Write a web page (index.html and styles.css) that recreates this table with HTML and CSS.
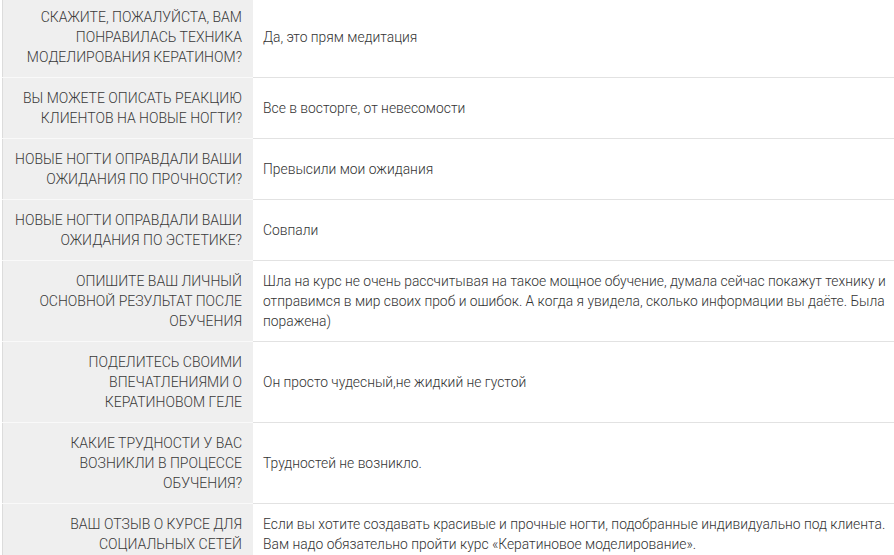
FILE: index.html
```html
<!DOCTYPE html>
<html lang="ru">
<head>
  <meta charset="UTF-8" />
  <meta name="viewport" content="width=device-width, initial-scale=1.0" />
  <title>Отзыв о курсе</title>
  <link rel="stylesheet" href="styles.css">
</head>
<body>
  <div class="review">
    <table class="qa-table">
      <tr>
        <td class="question">Скажите, пожалуйста, вам понравилась техника моделирования кератином?</td>
        <td class="answer">Да, это прям медитация</td>
      </tr>
      <tr>
        <td class="question">Вы можете описать реакцию клиентов на новые ногти?</td>
        <td class="answer">Все в восторге, от невесомости</td>
      </tr>
      <tr>
        <td class="question">Новые ногти оправдали ваши ожидания по прочности?</td>
        <td class="answer">Превысили мои ожидания</td>
      </tr>
      <tr>
        <td class="question">Новые ногти оправдали ваши ожидания по эстетике?</td>
        <td class="answer">Совпали</td>
      </tr>
      <tr>
        <td class="question">Опишите ваш личный основной результат после обучения</td>
        <td class="answer">Шла на курс не очень рассчитывая на такое мощное обучение, думала сейчас покажут технику и отправимся в мир своих проб и ошибок. А когда я увидела, сколько информации вы даёте. Была поражена)</td>
      </tr>
      <tr>
        <td class="question">Поделитесь своими впечатлениями о кератиновом геле</td>
        <td class="answer">Он просто чудесный,не жидкий не густой</td>
      </tr>
      <tr>
        <td class="question">Какие трудности у вас возникли в процессе обучения?</td>
        <td class="answer">Трудностей не возникло.</td>
      </tr>
      <tr>
        <td class="question">Ваш отзыв о курсе для социальных сетей</td>
        <td class="answer">Если вы хотите создавать красивые и прочные ногти, подобранные индивидуально под клиента.<br>Вам надо обязательно пройти курс «Кератиновое моделирование».</td>
      </tr>
    </table>
  </div>
</body>
</html>
```

FILE: styles.css
```css
body {
  margin: 0;
  font-family: Roboto, 'Liberation Sans', sans-serif;
  background-color: #fff;
  color: #333;
  overflow: hidden;
}
.review {
  padding-left: 2px;
  margin-top: -3px;
}
.qa-table {
  width: 100%;
  border-collapse: collapse;
  border-left: 1px solid #dcdcdc;
}
.qa-table td {
  font-weight: 300;
  line-height: 20px;
  padding: 10px;
  vertical-align: middle;
  border-bottom: 1px solid #e2e2e2;
}
.question {
  width: 229px;
  padding-right: 11px !important;
  font-size: 14px;
  background-color: #efefef;
  text-align: right;
  text-transform: uppercase;
  color: #3a3a3a;
  border-bottom-color: #f9f9f9 !important;
}
.answer {
  padding-right: 4px !important;
  font-size: 13.85px;
  color: #333;
}
```
